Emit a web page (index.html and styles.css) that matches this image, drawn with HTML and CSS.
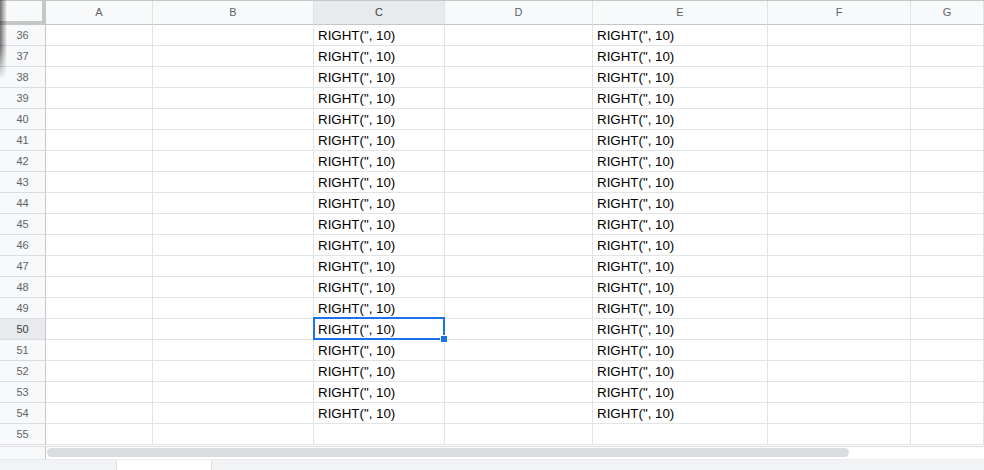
FILE: index.html
```html
<!DOCTYPE html>
<html lang="en">
<head>
    <meta charset="UTF-8">
    <title>Sheet</title>
    <link rel="stylesheet" href="styles.css">
</head>
<body>
    <div class="sheet">
        <div class="edge-shadow"></div>

        <div class="grid">
            <div class="row head">
                <div class="corner"></div>
                <div class="col">A</div><div class="col">B</div><div class="col sel">C</div><div class="col">D</div><div class="col">E</div><div class="col">F</div><div class="col">G</div>
            </div>
            <div class="row"><div class="num">36</div><div></div><div></div><div>RIGHT(", 10)</div><div></div><div>RIGHT(", 10)</div><div></div><div></div></div>
            <div class="row"><div class="num">37</div><div></div><div></div><div>RIGHT(", 10)</div><div></div><div>RIGHT(", 10)</div><div></div><div></div></div>
            <div class="row"><div class="num">38</div><div></div><div></div><div>RIGHT(", 10)</div><div></div><div>RIGHT(", 10)</div><div></div><div></div></div>
            <div class="row"><div class="num">39</div><div></div><div></div><div>RIGHT(", 10)</div><div></div><div>RIGHT(", 10)</div><div></div><div></div></div>
            <div class="row"><div class="num">40</div><div></div><div></div><div>RIGHT(", 10)</div><div></div><div>RIGHT(", 10)</div><div></div><div></div></div>
            <div class="row"><div class="num">41</div><div></div><div></div><div>RIGHT(", 10)</div><div></div><div>RIGHT(", 10)</div><div></div><div></div></div>
            <div class="row"><div class="num">42</div><div></div><div></div><div>RIGHT(", 10)</div><div></div><div>RIGHT(", 10)</div><div></div><div></div></div>
            <div class="row"><div class="num">43</div><div></div><div></div><div>RIGHT(", 10)</div><div></div><div>RIGHT(", 10)</div><div></div><div></div></div>
            <div class="row"><div class="num">44</div><div></div><div></div><div>RIGHT(", 10)</div><div></div><div>RIGHT(", 10)</div><div></div><div></div></div>
            <div class="row"><div class="num">45</div><div></div><div></div><div>RIGHT(", 10)</div><div></div><div>RIGHT(", 10)</div><div></div><div></div></div>
            <div class="row"><div class="num">46</div><div></div><div></div><div>RIGHT(", 10)</div><div></div><div>RIGHT(", 10)</div><div></div><div></div></div>
            <div class="row"><div class="num">47</div><div></div><div></div><div>RIGHT(", 10)</div><div></div><div>RIGHT(", 10)</div><div></div><div></div></div>
            <div class="row"><div class="num">48</div><div></div><div></div><div>RIGHT(", 10)</div><div></div><div>RIGHT(", 10)</div><div></div><div></div></div>
            <div class="row"><div class="num">49</div><div></div><div></div><div>RIGHT(", 10)</div><div></div><div>RIGHT(", 10)</div><div></div><div></div></div>
            <div class="row"><div class="num sel">50</div><div></div><div></div><div class="active">RIGHT(", 10)</div><div></div><div>RIGHT(", 10)</div><div></div><div></div></div>
            <div class="row"><div class="num">51</div><div></div><div></div><div>RIGHT(", 10)</div><div></div><div>RIGHT(", 10)</div><div></div><div></div></div>
            <div class="row"><div class="num">52</div><div></div><div></div><div>RIGHT(", 10)</div><div></div><div>RIGHT(", 10)</div><div></div><div></div></div>
            <div class="row"><div class="num">53</div><div></div><div></div><div>RIGHT(", 10)</div><div></div><div>RIGHT(", 10)</div><div></div><div></div></div>
            <div class="row"><div class="num">54</div><div></div><div></div><div>RIGHT(", 10)</div><div></div><div>RIGHT(", 10)</div><div></div><div></div></div>
            <div class="row"><div class="num">55</div><div></div><div></div><div></div><div></div><div></div><div></div><div></div></div>
        </div>

        <div class="scroll-strip">
            <div class="strip-head"></div>
            <div class="track">
                <div class="thumb"></div>
            </div>
        </div>

        <div class="tab-bar">
            <div class="tab"></div>
        </div>
    </div>
</body>
</html>
```

FILE: styles.css
```css
body {
    margin: 0;
    padding: 0;
    font-family: "Liberation Sans", Arial, sans-serif;
    background-color: #fff;
    overflow: hidden;
}

.sheet {
    position: relative;
    width: 984px;
    height: 470px;
    display: flex;
    flex-direction: column;
    overflow: hidden;
}

/* dark shadow on the far left edge */
.edge-shadow {
    position: absolute;
    top: 0;
    left: 0;
    width: 7px;
    height: 80px;
    background: linear-gradient(to right, rgba(0,0,0,0.55), rgba(0,0,0,0));
    -webkit-mask-image: linear-gradient(to bottom, #000 60%, transparent);
    mask-image: linear-gradient(to bottom, #000 60%, transparent);
    z-index: 5;
}

.grid {
    border-top: 1px solid #c4c7c5;
}

.row {
    display: grid;
    grid-template-columns: 46px 107px 161px 131px 148px 175px 143px 1fr;
    grid-template-rows: 21px;
    height: 21px;
}

.row > div {
    box-sizing: border-box;
    border-right: 1px solid #e2e3e3;
    border-bottom: 1px solid #e2e3e3;
    font-size: 13.33px;
    line-height: 21px;
    padding: 0 3px 0 4px;
    color: #000;
    white-space: nowrap;
}

/* Column headers */
.row.head {
    grid-template-rows: 24px;
    height: 24px;
}

.row.head > div {
    background-color: #f8f9fa;
    border-bottom: 1px solid #c4c7c5;
    font-size: 11px;
    line-height: 23px;
    padding: 0;
    color: #5f6368;
    text-align: center;
}

.row.head > .corner {
    border-right: 4px solid #c4c7c5;
    border-bottom: 4px solid #c4c7c5;
}

.row.head > .col.sel {
    background-color: #e8eaed;
    color: #3c4043;
}

/* Row numbers */
.row > .num {
    background-color: #f8f9fa;
    border-right: 1px solid #c4c7c5;
    border-bottom: 1px solid #dadce0;
    font-size: 11px;
    line-height: 20px;
    padding: 0;
    color: #5f6368;
    text-align: center;
}

.row > .num.sel {
    background-color: #e8eaed;
    color: #3c4043;
}

/* Active cell */
.row > .active {
    position: relative;
}

.row > .active::after {
    content: "";
    position: absolute;
    top: -2px;
    left: -1px;
    right: -1px;
    bottom: -1px;
    border: 2px solid #1a73e8;
}

.row > .active::before {
    content: "";
    position: absolute;
    right: -4px;
    bottom: -4px;
    width: 6px;
    height: 6px;
    background-color: #1a73e8;
    border: 1px solid #fff;
    z-index: 2;
}

/* Horizontal scrollbar strip */
.scroll-strip {
    display: flex;
    height: 12px;
    margin-top: 1px;
    border-top: 1px solid #dadce0;
}

.strip-head {
    width: 45px;
    background-color: #f8f9fa;
    border-right: 1px solid #c4c7c5;
}

.track {
    flex-grow: 1;
    padding: 1px 0 0 1px;
}

.thumb {
    width: 802px;
    height: 9px;
    border-radius: 5px;
    background-color: #dadce0;
}

/* Sheet tabs */
.tab-bar {
    flex-grow: 1;
    background-color: #f1f3f4;
    border-top: 1px solid #e8eaed;
    padding-left: 116px;
}

.tab {
    width: 96px;
    height: 100%;
    background-color: #fff;
    box-sizing: border-box;
    border-left: 1px solid #e0e0e0;
    border-right: 1px solid #e0e0e0;
}
```
